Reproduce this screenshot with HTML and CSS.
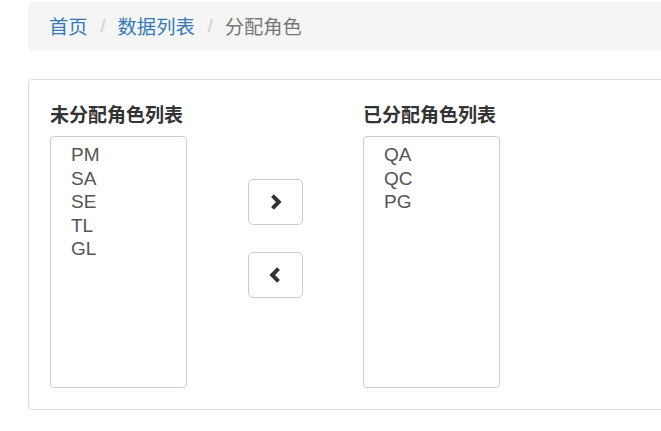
FILE: index.html
```html
<!DOCTYPE html>
<html lang="zh">
<head>
<meta charset="utf-8">
<title>分配角色</title>
<link rel="stylesheet" href="styles.css">
</head>
<body>
<div class="page">
  <ol class="breadcrumb">
    <li><a href="#">首页</a></li>
    <li class="sep">/</li>
    <li><a href="#">数据列表</a></li>
    <li class="sep">/</li>
    <li class="active">分配角色</li>
  </ol>
  <div class="panel">
    <div class="panel-body">
      <div class="col">
        <div class="label">未分配角色列表</div>
        <div class="listbox" role="listbox">
          <div class="opt">PM</div>
          <div class="opt">SA</div>
          <div class="opt">SE</div>
          <div class="opt">TL</div>
          <div class="opt">GL</div>
        </div>
      </div>
      <div class="btns">
        <button class="btn" type="button" aria-label="添加">
          <svg width="14" height="18" viewBox="0 0 14 18"><polyline points="3.5,2.6 9.8,9 3.5,15.4" fill="none" stroke="#333" stroke-width="4" stroke-linejoin="miter"/></svg>
        </button>
        <button class="btn" type="button" aria-label="移除">
          <svg width="14" height="18" viewBox="0 0 14 18"><polyline points="9.5,2.6 3.2,9 9.5,15.4" fill="none" stroke="#333" stroke-width="4" stroke-linejoin="miter"/></svg>
        </button>
      </div>
      <div class="col">
        <div class="label">已分配角色列表</div>
        <div class="listbox" role="listbox">
          <div class="opt">QA</div>
          <div class="opt">QC</div>
          <div class="opt">PG</div>
        </div>
      </div>
    </div>
  </div>
</div>
</body>
</html>
```
FILE: styles.css
```css
html, body {
  margin: 0;
  padding: 0;
  background: #fff;
  overflow: hidden;
}
body {
  font-family: "Liberation Sans", Arial, "Noto Sans CJK SC", sans-serif;
  color: #333;
}
.page {
  padding: 2px 0 0 28px;
  width: 680px;
}
.breadcrumb {
  list-style: none;
  margin: 0;
  height: 48px;
  padding: 0 0 0 21px;
  background: #f5f5f5;
  border-radius: 4px;
  display: flex;
  align-items: center;
  font-size: 19.3px;
  font-family: "Noto Sans CJK SC", sans-serif;
}
.breadcrumb li {
  line-height: 26px;
}
.breadcrumb a {
  color: #337ab7;
  text-decoration: none;
}
.breadcrumb .sep {
  color: #ccc;
  padding: 0 12px 0 13px;
  font-family: "Liberation Sans", Arial, sans-serif;
  font-size: 18px;
}
.breadcrumb .active {
  color: #777;
}
.panel {
  margin-top: 29px;
  height: 329px;
  border: 1px solid #ddd;
  border-radius: 4px;
  box-shadow: 0 1px 1px rgba(0,0,0,.05);
}
.panel-body {
  display: flex;
  padding: 21px 0 0 21px;
}
.col {
  display: flex;
  flex-direction: column;
}
.label {
  font-family: "Noto Sans CJK SC", sans-serif;
  font-weight: bold;
  font-size: 19px;
  line-height: 26px;
  color: #333;
  margin-bottom: 9px;
  white-space: nowrap;
}
.listbox {
  height: 252px;
  width: 137px;
  border: 1px solid #ccc;
  border-radius: 4px;
  padding: 6px 0 0 0;
  box-sizing: border-box;
}
.opt {
  font-size: 19px;
  line-height: 23.5px;
  padding-left: 20px;
  color: #555;
}
.btns {
  display: flex;
  flex-direction: column;
  gap: 27px;
  padding-top: 78px;
  margin: 0 60px 0 61px;
}
.btn {
  width: 55px;
  height: 46px;
  border: 1px solid #ccc;
  border-radius: 5px;
  background: #fff;
  padding: 0;
  display: flex;
  align-items: center;
  justify-content: center;
  cursor: pointer;
}
.btn svg {
  display: block;
}
```
